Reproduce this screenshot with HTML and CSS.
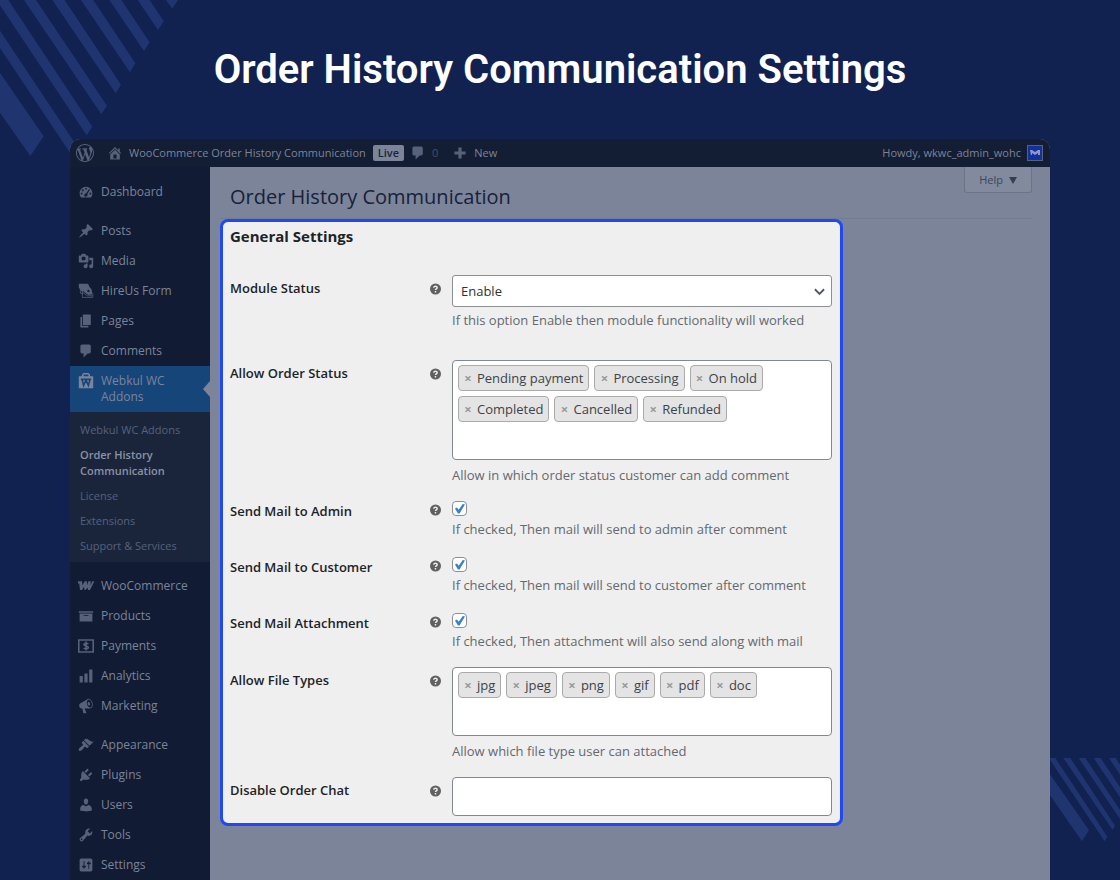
FILE: index.html
```html
<!DOCTYPE html>
<html lang="en">
<head>
  <meta charset="UTF-8" />
  <meta name="viewport" content="width=device-width, initial-scale=1" />
  <title>Order History Communication Settings</title>
  <link rel="stylesheet" href="styles.css">
</head>
<body>

  <!-- background stripes -->
  <svg class="stripes stripes-top" viewBox="0 0 540 480" aria-hidden="true">
    <path d="M0 218L131 409 91 468 0 338zM0 92L234 443 217 469 0 144zM0 0H25L277 380 260 406 0 16zM72 0H108L321 317 304 343zM157 0H194L363 254 347 280zM243 0H280L406 190 390 217zM328 0H364L449 127 432 153zM413 0H449L491 64 474 90zM498 0H534L517 26z"/>
  </svg>
  <svg class="stripes stripes-bottom" viewBox="0 0 210 366" aria-hidden="true">
    <path d="M0 49L117 217 96 250 0 112zM0 0H16L172 236 164 250 0 6zM40 0H61L195 203 188 216zM86 0H106L210 156V183zM131 0H152L210 88V118zM177 0H197L210 20V50z"/>
  </svg>

  <h1 class="title">Order History Communication Settings</h1>

  <div class="window">
    <header class="adminbar">
      <a href="#" class="bar-link" aria-label="WordPress">
        <svg class="wp-logo" viewBox="0 0 20 20"><path d="M20 10c0-5.51-4.49-10-10-10C4.48 0 0 4.49 0 10c0 5.52 4.48 10 10 10 5.51 0 10-4.48 10-10zM7.78 15.37L4.37 6.22c.55-.02 1.17-.08 1.17-.08.5-.06.44-1.13-.06-1.11 0 0-1.45.11-2.37.11-.18 0-.37 0-.58-.01C4.12 2.69 6.87 1.11 10 1.11c2.33 0 4.45.87 6.05 2.34-.68-.11-1.65.39-1.65 1.58 0 .74.45 1.36.9 2.1.35.61.55 1.36.55 2.46 0 1.49-1.4 5-1.4 5l-3.03-8.37c.54-.02.82-.17.82-.17.5-.05.44-1.25-.06-1.22 0 0-1.44.12-2.38.12-.87 0-2.33-.12-2.33-.12-.5-.03-.56 1.2-.06 1.22l.92.08 1.26 3.41zM17.41 10c.24-.64.74-1.87.43-4.25.7 1.29 1.05 2.71 1.05 4.25 0 3.29-1.73 6.24-4.4 7.78.97-2.59 1.94-5.2 2.92-7.78zM6.1 18.09C3.12 16.65 1.11 13.53 1.11 10c0-1.3.23-2.48.72-3.59C3.25 10.3 4.67 14.2 6.1 18.09zm4.03-6.63l2.58 6.98c-.86.29-1.76.45-2.71.45-.79 0-1.57-.11-2.29-.33.81-2.38 1.62-4.74 2.42-7.1z"/></svg>
      </a>
      <a href="#" class="bar-link bar-site">
        <svg class="icon" viewBox="0 0 20 20"><path d="M16 8.5l1.53 1.53-1.06 1.06L10 4.6l-6.47 6.49-1.06-1.06L10 2.5l4 4v-2h2v4zm-6-2.46l6 5.99V18H4v-5.97zM12 17v-5H8v5h4z"/></svg>
        <span>WooCommerce Order History Communication</span>
      </a>
      <span class="live">Live</span>
      <a href="#" class="bar-link bar-comments">
        <svg class="icon" viewBox="0 0 20 20"><path d="M5 2h9c1.1 0 2 .9 2 2v7c0 1.1-.9 2-2 2h-2l-5 5v-5H5c-1.1 0-2-.9-2-2V4c0-1.1.9-2 2-2z"/></svg>
        <span class="count">0</span>
      </a>
      <a href="#" class="bar-link bar-new">
        <svg class="icon" viewBox="0 0 20 20"><path d="M8 3h4v5h5v4h-5v5H8v-5H3V8h5z"/></svg>
        <span>New</span>
      </a>
      <a href="#" class="bar-link bar-user">
        <span>Howdy, wkwc_admin_wohc</span>
        <svg class="avatar" viewBox="0 0 16 16"><rect x=".5" y=".5" width="15" height="15"/><path d="M3 5h2l3 2 3-2h2v5h-2V8l-3 2-3-2v2H4z"/></svg>
      </a>
    </header>

    <div class="body">
      <nav class="sidebar">
        <ul class="menu">
          <li><a href="#"><svg class="icon" viewBox="0 0 20 20"><path fill-rule="evenodd" d="M3.76 17C2.6 15.5 2 13.7 2 11.7 2 7.2 5.6 3.5 10 3.5s8 3.7 8 8.2c0 2-.6 3.8-1.76 5.3zM9 5h2v2H9zM5 7h2v2H5zM3.5 11h2v2h-2zM14.5 11h2v2h-2zM13.8 6.3l1 .8-3.2 5.7a2 2 0 1 1-1.5-1z"/></svg><span>Dashboard</span></a></li>
          <li class="separator"></li>
          <li><a href="#"><svg class="icon" viewBox="0 0 20 20"><path d="M10.44 3.02l1.82-1.82 6.36 6.35-1.83 1.82c-1.05-.68-2.48-.57-3.41.36l-.75.75c-.92.93-1.04 2.35-.35 3.41l-1.83 1.82-2.41-2.41-2.8 2.79c-.42.42-3.38 2.71-3.8 2.29s1.86-3.39 2.28-3.81l2.79-2.79L4.1 9.36l1.83-1.82c1.05.69 2.48.57 3.4-.36l.75-.75c.93-.92 1.05-2.35.36-3.41z"/></svg><span>Posts</span></a></li>
          <li><a href="#"><svg class="icon" viewBox="0 0 20 20"><path d="M13 11V4c0-.55-.45-1-1-1h-1.67L9 1H5L3.67 3H2c-.55 0-1 .45-1 1v7c0 .55.45 1 1 1h10c.55 0 1-.45 1-1zM7 4.5c1.38 0 2.5 1.12 2.5 2.5S8.38 9.5 7 9.5 4.5 8.38 4.5 7 5.62 4.5 7 4.5zM14 6h5v10.5c0 1.38-1.12 2.5-2.5 2.5S14 17.88 14 16.5s1.12-2.5 2.5-2.5c.17 0 .34.02.5.05V9h-3V6zm-4 8.05V13h2v3.5c0 1.38-1.12 2.5-2.5 2.5S7 17.88 7 16.5 8.12 14 9.5 14c.17 0 .34.02.5.05z"/></svg><span>Media</span></a></li>
          <li><a href="#"><svg class="icon" viewBox="0 0 20 20"><path d="M1 1h11l2 2-9 8-4-5z"/><path class="form-mark" d="M3 6v7h3M5.500 8v10h13v-5M6 12l6 4h6"/><path fill-rule="evenodd" d="M5 5l8-2 4 5 1 6-5 1-6-4zM13 8.500a1.500 1.500 0 1 0 .1 0z"/></svg><span>HireUs Form</span></a></li>
          <li><a href="#"><svg class="icon" viewBox="0 0 20 20"><path d="M6 15V2h10v13H6zm-1 1h8v2H3V5h2v11z"/></svg><span>Pages</span></a></li>
          <li><a href="#"><svg class="icon" viewBox="0 0 20 20"><path d="M5 2h9c1.1 0 2 .9 2 2v7c0 1.1-.9 2-2 2h-2l-5 5v-5H5c-1.1 0-2-.9-2-2V4c0-1.1.9-2 2-2z"/></svg><span>Comments</span></a></li>
          <li class="active">
            <a href="#"><svg class="icon" viewBox="0 0 20 20"><path fill-rule="evenodd" d="M1 4h4V2l2-2h6l2 2v2h4v15H1zM7 4h6V2H7z"/><path class="bag-mark" d="M5 8l2 7.500L10 9l3 6.500L15 8M3.500 8h13"/></svg><span>Webkul WC Addons</span></a>
            <ul class="submenu">
              <li><a href="#">Webkul WC Addons</a></li>
              <li><a href="#" class="current">Order History Communication</a></li>
              <li><a href="#">License</a></li>
              <li><a href="#">Extensions</a></li>
              <li><a href="#">Support &amp; Services</a></li>
            </ul>
          </li>
          <li class="separator"></li>
          <li><a href="#"><svg class="icon" viewBox="0 0 20 20"><path d="M0 4h5l.5 5L8.500 4H11l.5 5c.5-2 1-3.500 1.500-5h3l-.5 5L18 4h2.500l-5.500 11h-2.500l-.5-3c-1 2-2 3-4 3l-.5-4-2.500 4H2.500L1.500 7H0z"/></svg><span>WooCommerce</span></a></li>
          <li><a href="#"><svg class="icon" viewBox="0 0 20 20"><path d="M19 4v2H1V4h18zM2 7h16v10H2V7zm11 3V9H7v1h6z"/></svg><span>Products</span></a></li>
          <li><a href="#"><svg class="icon" viewBox="0 0 20 20"><path class="pay-mark" d="M1 2.500h18v15H1zM13 7.500c-1-1-5.500-1.500-5.500.5 0 2.500 5.500 1.500 5.500 4 0 2-4.500 2-6 .5M10 4.500v11"/></svg><span>Payments</span></a></li>
          <li><a href="#"><svg class="icon" viewBox="0 0 20 20"><path d="M18 18V2h-4v16h4zm-6 0V7H8v11h4zm-6 0v-8H2v8h4z"/></svg><span>Analytics</span></a></li>
          <li><a href="#"><svg class="icon" viewBox="0 0 20 20"><path d="M18.15 5.94c.46 1.62.38 3.22-.02 4.48-.42 1.28-1.26 2.18-2.3 2.48-.16.06-.26.06-.4.06-.06.02-.12.02-.18.02-.06.02-.14.02-.22.02h-6.8l2.22 5.5c.02.14-.06.26-.14.34-.08.1-.24.16-.34.16H6.95c-.1 0-.26-.06-.34-.16-.08-.08-.16-.2-.14-.34l-1-5.5H4.25l-.02-.02c-.5.06-1.08-.18-1.54-.62s-.88-1.08-1.06-1.88c-.24-.8-.2-1.56-.02-2.2.18-.62.58-1.08 1.06-1.3l.02-.02 9-5.4c.1-.06.18-.1.24-.16.06-.04.14-.08.24-.12.16-.08.28-.12.5-.18 1.04-.3 2.24.1 3.22.98s1.84 2.24 2.26 3.86zm-2.58 5.98h-.02c.4-.1.74-.34 1.04-.7.58-.7.86-1.76.86-3.04 0-.64-.1-1.3-.28-1.98-.34-1.36-1.02-2.5-1.78-3.24s-1.68-1.1-2.46-.88c-.82.22-1.4.96-1.7 2-.32 1.04-.28 2.36.06 3.72.38 1.36 1 2.5 1.8 3.24.78.74 1.62 1.1 2.48.88zm-2.54-7.08c.22-.04.42-.02.62.04.38.16.76.48 1.02 1s.42 1.2.42 1.78c0 .3-.04.56-.12.8-.18.48-.44.84-.86.94-.34.1-.8-.06-1.14-.4s-.64-.86-.78-1.5c-.18-.62-.12-1.24.02-1.72s.48-.84.82-.94z"/></svg><span>Marketing</span></a></li>
          <li class="separator"></li>
          <li><a href="#"><svg class="icon" viewBox="0 0 20 20"><path d="M14.48 11.06L7.41 3.99l1.5-1.5c.5-.56 2.3-.47 3.51.32 1.21.8 1.43 1.28 2.91 2.1 1.18.64 2.45 1.26 4.45.85zm-.71.71L6.7 4.7 4.93 6.47c-.39.39-.39 1.02 0 1.41l1.06 1.06c.39.39.39 1.03 0 1.42-.6.6-1.43 1.11-2.21 1.69-.35.26-.7.53-1.01.84C1.43 14.23.4 16.08 1.4 17.07c.99 1 2.84-.03 4.18-1.36.31-.31.58-.66.85-1.02.57-.78 1.08-1.61 1.69-2.21.39-.39 1.02-.39 1.41 0l1.06 1.06c.39.39 1.02.39 1.41 0z"/></svg><span>Appearance</span></a></li>
          <li><a href="#"><svg class="icon" viewBox="0 0 20 20"><path d="M13.11 4.36L9.87 7.6 8 5.73l3.24-3.24c.35-.34 1.05-.2 1.56.32.52.51.66 1.21.31 1.55zm-8 1.77l.91-1.12 9.01 9.01-1.19.84c-.71.71-2.63 1.16-3.82 1.16H6.14L4.9 17.26c-.59.59-1.54.59-2.12 0-.59-.58-.59-1.53 0-2.12l1.24-1.24v-3.88c0-1.13.4-3.19 1.09-3.89zm7.26 3.97l3.24-3.24c.34-.35 1.04-.21 1.55.31.52.51.66 1.21.31 1.55l-3.24 3.25z"/></svg><span>Plugins</span></a></li>
          <li><a href="#"><svg class="icon" viewBox="0 0 20 20"><path d="M10 9.25c-2.27 0-2.73-3.44-2.73-3.44C7 4.02 7.82 2 9.97 2c2.16 0 2.98 2.02 2.71 3.81 0 0-.41 3.44-2.68 3.44zm0 2.57L12.72 10c2.39 0 4.52 2.33 4.52 4.53v2.49s-3.65 1.13-7.24 1.13c-3.65 0-7.24-1.13-7.24-1.13v-2.49c0-2.25 1.94-4.48 4.47-4.48z"/></svg><span>Users</span></a></li>
          <li><a href="#"><svg class="icon" viewBox="0 0 20 20"><path d="M16.68 9.77c-1.34 1.34-3.3 1.67-4.95.99l-5.41 6.52c-.99.99-2.59.99-3.58 0s-.99-2.59 0-3.57l6.52-5.42c-.68-1.65-.35-3.61.99-4.95 1.28-1.28 3.12-1.62 4.72-1.06l-2.89 2.89 2.82 2.82 2.86-2.87c.53 1.58.18 3.39-1.08 4.65zM3.81 16.21c.4.39 1.04.39 1.43 0 .4-.4.4-1.04 0-1.43-.39-.4-1.03-.4-1.43 0-.39.39-.39 1.03 0 1.43z"/></svg><span>Tools</span></a></li>
          <li><a href="#"><svg class="icon" viewBox="0 0 20 20"><path d="M18 16V4c0-1.1-.9-2-2-2H4c-1.1 0-2 .9-2 2v12c0 1.1.9 2 2 2h12c1.1 0 2-.9 2-2zM8 11h1c.55 0 1 .45 1 1s-.45 1-1 1H8v1.5c0 .28-.22.5-.5.5s-.5-.22-.5-.5V13H6c-.55 0-1-.45-1-1s.45-1 1-1h1V5.5c0-.28.22-.5.5-.5s.5.22.5.5V11zm5-2h-1c-.55 0-1-.45-1-1s.45-1 1-1h1V5.5c0-.28.22-.5.5-.5s.5.22.5.5V7h1c.55 0 1 .45 1 1s-.45 1-1 1h-1v5.5c0 .28-.22.5-.5.5s-.5-.22-.5-.5V9z"/></svg><span>Settings</span></a></li>
        </ul>
      </nav>

      <main class="content">
        <div class="page-head">
          <h2>Order History Communication</h2>
          <button type="button" class="help">Help <svg viewBox="0 0 8 8"><path d="M0 1h8L4 8z"/></svg></button>
        </div>

        <form class="panel">
          <h3>General Settings</h3>

          <div class="row row-select">
            <label for="status">Module Status</label>
            <svg class="tip" viewBox="0 0 12 12"><circle cx="6" cy="6" r="6"/><path d="M4.200 4.600c0-2.300 3.600-2.200 3.600 0C7.800 5.900 6 5.800 6 7.200M6 8.300v1.600"/></svg>
            <div>
              <div class="select-wrap">
                <select id="status">
                  <option>Enable</option>
                  <option>Disable</option>
                </select>
                <svg class="chevron" viewBox="0 0 12 8"><path d="M1 1l5 5 5-5"/></svg>
              </div>
              <p>If this option Enable then module functionality will worked</p>
            </div>
          </div>

          <div class="row">
            <label for="order-status">Allow Order Status</label>
            <svg class="tip" viewBox="0 0 12 12"><circle cx="6" cy="6" r="6"/><path d="M4.200 4.600c0-2.300 3.600-2.200 3.600 0C7.800 5.900 6 5.800 6 7.200M6 8.300v1.600"/></svg>
            <div>
              <div class="tags tags-tall">
                <span class="tag"><button type="button">×</button>Pending payment</span>
                <span class="tag"><button type="button">×</button>Processing</span>
                <span class="tag"><button type="button">×</button>On hold</span>
                <span class="tag"><button type="button">×</button>Completed</span>
                <span class="tag"><button type="button">×</button>Cancelled</span>
                <span class="tag"><button type="button">×</button>Refunded</span>
                <input type="text" id="order-status">
              </div>
              <p>Allow in which order status customer can add comment</p>
            </div>
          </div>

          <div class="row row-check">
            <label for="mail-admin">Send Mail to Admin</label>
            <svg class="tip" viewBox="0 0 12 12"><circle cx="6" cy="6" r="6"/><path d="M4.200 4.600c0-2.300 3.600-2.200 3.600 0C7.800 5.900 6 5.800 6 7.200M6 8.300v1.600"/></svg>
            <div>
              <input type="checkbox" id="mail-admin" checked>
              <p>If checked, Then mail will send to admin after comment</p>
            </div>
          </div>

          <div class="row row-check">
            <label for="mail-customer">Send Mail to Customer</label>
            <svg class="tip" viewBox="0 0 12 12"><circle cx="6" cy="6" r="6"/><path d="M4.200 4.600c0-2.300 3.600-2.200 3.600 0C7.800 5.900 6 5.800 6 7.200M6 8.300v1.600"/></svg>
            <div>
              <input type="checkbox" id="mail-customer" checked>
              <p>If checked, Then mail will send to customer after comment</p>
            </div>
          </div>

          <div class="row row-check row-tight">
            <label for="mail-attach">Send Mail Attachment</label>
            <svg class="tip" viewBox="0 0 12 12"><circle cx="6" cy="6" r="6"/><path d="M4.200 4.600c0-2.300 3.600-2.200 3.600 0C7.800 5.900 6 5.800 6 7.200M6 8.300v1.600"/></svg>
            <div>
              <input type="checkbox" id="mail-attach" checked>
              <p>If checked, Then attachment will also send along with mail</p>
            </div>
          </div>

          <div class="row row-tight">
            <label for="file-types">Allow File Types</label>
            <svg class="tip" viewBox="0 0 12 12"><circle cx="6" cy="6" r="6"/><path d="M4.200 4.600c0-2.300 3.600-2.200 3.600 0C7.800 5.900 6 5.800 6 7.200M6 8.300v1.600"/></svg>
            <div>
              <div class="tags">
                <span class="tag"><button type="button">×</button>jpg</span>
                <span class="tag"><button type="button">×</button>jpeg</span>
                <span class="tag"><button type="button">×</button>png</span>
                <span class="tag"><button type="button">×</button>gif</span>
                <span class="tag"><button type="button">×</button>pdf</span>
                <span class="tag"><button type="button">×</button>doc</span>
                <input type="text" id="file-types">
              </div>
              <p>Allow which file type user can attached</p>
            </div>
          </div>

          <div class="row row-last">
            <label for="chat">Disable Order Chat</label>
            <svg class="tip" viewBox="0 0 12 12"><circle cx="6" cy="6" r="6"/><path d="M4.200 4.600c0-2.300 3.600-2.200 3.600 0C7.800 5.900 6 5.800 6 7.200M6 8.300v1.600"/></svg>
            <div>
              <input type="text" id="chat" class="text-box">
            </div>
          </div>
        </form>
      </main>
    </div>
  </div>

</body>
</html>
```
FILE: styles.css
```css
* {
  box-sizing: border-box;
}
body {
  margin: 0;
  min-height: 100vh;
  display: flex;
  flex-direction: column;
  position: relative;
  background: #112150;
  font-family: "Open Sans", "Noto Sans", sans-serif;
  font-size: 13px;
  line-height: 18px;
}
a {
  color: inherit;
  text-decoration: none;
}
ul {
  margin: 0;
  padding: 0;
  list-style: none;
}
button, input, select {
  font: inherit;
  color: inherit;
}

/* background */
.stripes {
  position: absolute;
  fill: #20356f;
}
.stripes-top {
  top: 0;
  left: 0;
  width: 180px;
}
.stripes-bottom {
  right: 0;
  bottom: 0;
  width: 70px;
}

.title {
  margin: 0;
  padding: 46px 20px 45px;
  color: #fff;
  font-family: Roboto, sans-serif;
  font-size: 40px;
  font-weight: 600;
  line-height: 48px;
  text-align: center;
}

.window {
  flex: 1;
  display: flex;
  flex-direction: column;
  position: relative;
  margin: 0 70px;
  border-radius: 10px 10px 0 0;
  overflow: hidden;
  background: #7c8499;
}

/* admin bar */
.adminbar {
  display: flex;
  align-items: center;
  height: 28px;
  padding: 0 7px 0 6px;
  background: #131d33;
  color: #7c8499;
  font-size: 11px;
}
.icon {
  flex: none;
  width: 16px;
  height: 16px;
  fill: #56617a;
}
.bar-link {
  display: flex;
  align-items: center;
  gap: 6px;
}
.wp-logo {
  width: 18px;
  height: 18px;
  fill: #56617a;
}
.bar-site {
  margin-left: 13px;
}
.live {
  margin: 0 6px 0 7px;
  padding: 0 5px;
  border-radius: 2px;
  background: #7c8499;
  color: #1a2439;
  font-weight: 600;
  line-height: 16px;
}
.count {
  color: #465068;
}
.bar-new {
  margin-left: 14px;
}
.bar-user {
  margin-left: auto;
}
.avatar {
  width: 16px;
  height: 16px;
  fill: #142fa0;
  stroke: #56617a;
}
.avatar path {
  fill: #8f9bc0;
  stroke: none;
}

.body {
  flex: 1;
  display: flex;
}

/* side menu */
.sidebar {
  flex: none;
  width: 140px;
  padding-top: 10px;
  background: #111b33;
  color: #7c8499;
  font-size: 12px;
}
.menu > li > a {
  display: flex;
  gap: 7px;
  padding: 7px 20px 7px 8px;
  line-height: 16px;
}
.separator {
  height: 9px;
}
.active > a {
  position: relative;
  background: #16457a;
}
.active > a::after {
  content: "";
  position: absolute;
  right: 0;
  top: 15px;
  border: 8px solid transparent;
  border-right: 7px solid #7c8499;
  border-left: 0;
}
.active .icon {
  fill: #7c8499;
}
.active > a span {
  max-width: 80px;
}
.bag-mark {
  fill: none;
  stroke: #16457a;
  stroke-width: 2;
}
.form-mark {
  fill: none;
  stroke: #56617a;
}
.pay-mark {
  fill: none;
  stroke: #56617a;
  stroke-width: 2;
}
.submenu {
  display: flex;
  flex-direction: column;
  gap: 1px;
  padding: 6px 0 4px;
  background: #1a253c;
  color: #56617a;
  font-size: 11px;
  line-height: 16px;
}
.submenu a {
  display: block;
  padding: 4px 10px;
}
.submenu .current {
  color: #8a91a4;
  font-weight: 600;
}

/* page */
.content {
  flex: 1;
  min-width: 0;
  padding: 0 18px 20px 10px;
}
.page-head {
  display: flex;
  justify-content: space-between;
  align-items: flex-start;
  height: 52px;
  padding-left: 10px;
  border-bottom: 1px solid #747c91;
}
.page-head h2 {
  margin: 0;
  padding-top: 17px;
  color: #17213a;
  font-size: 20px;
  font-weight: 400;
  line-height: 26px;
}
.help {
  display: flex;
  align-items: center;
  gap: 6px;
  height: 26px;
  padding: 0 14px;
  border: 1px solid #6b748a;
  border-top: 0;
  border-radius: 0 0 3px 3px;
  background: #828a9e;
  color: #3c465c;
  font-size: 11px;
}
.help svg {
  width: 8px;
  height: 8px;
  fill: #333d55;
}

.panel {
  max-width: 623px;
  padding: 5px 8px 7px 7px;
  border: 3px solid #2049f5;
  border-radius: 8px;
  background: #efefef;
  color: #1d2327;
}
.panel h3 {
  margin: 0 0 29px;
  font-size: 15px;
  line-height: 19px;
}
.row {
  display: grid;
  grid-template-columns: 200px 22px 1fr;
  padding-bottom: 16px;
}
.row > label {
  padding-top: 4px;
  font-weight: 600;
}
.row p {
  margin: 6px 0 0;
  color: #646970;
  line-height: 19px;
}
.tip {
  width: 11px;
  height: 12px;
  margin-top: 8px;
  fill: #606060;
}
.tip path {
  fill: none;
  stroke: #eee;
  stroke-width: 1.6;
}
.row-select {
  padding-bottom: 30px;
}
.row-select p {
  margin-top: 4px;
}
.row-check {
  padding-bottom: 18px;
}
.row-check > label {
  padding-top: 1px;
}
.row-check .tip {
  margin-top: 3px;
}
.row-check p {
  margin-top: 4px;
}
.row-tight {
  padding-bottom: 16px;
}
.row-last {
  padding-bottom: 0;
}

.select-wrap {
  position: relative;
}
select {
  display: block;
  width: 100%;
  height: 32px;
  padding: 0 8px;
  appearance: none;
  border: 1px solid #8c8f94;
  border-radius: 3px;
  background: #fff;
  color: #2c3338;
}
.chevron {
  position: absolute;
  right: 7px;
  top: 13px;
  width: 11px;
  height: 8px;
  fill: none;
  stroke: #50575e;
  stroke-width: 2;
}
.tags {
  display: flex;
  flex-wrap: wrap;
  align-content: flex-start;
  gap: 5px;
  min-height: 69px;
  padding: 4px 5px;
  border: 1px solid #7e8993;
  border-radius: 4px;
  background: #fff;
}
.tags-tall {
  min-height: 100px;
}
.tags input {
  width: 20px;
  height: 26px;
  padding: 0;
  border: 0;
  outline: 0;
  background: transparent;
}
.tag {
  display: flex;
  align-items: center;
  height: 26px;
  padding: 0 5px;
  border: 1px solid #aaa;
  border-radius: 4px;
  background: #e4e4e4;
  color: #3c434a;
}
.tag button {
  width: 8px;
  margin-right: 5px;
  padding: 0;
  border: 0;
  background: none;
  color: #999;
  font-weight: 700;
}
input[type="checkbox"] {
  display: block;
  width: 15px;
  height: 15px;
  margin: 0;
  appearance: none;
  border: 1px solid #8c8f94;
  border-radius: 4px;
  background: #fff;
}
input[type="checkbox"]:checked::before {
  content: "";
  display: block;
  height: 13px;
  background: #3582c4;
  clip-path: polygon(15% 50%, 30% 42%, 44% 60%, 75% 15%, 92% 20%, 50% 88%, 38% 88%);
}
.text-box {
  display: block;
  width: 100%;
  height: 39px;
  padding: 0 8px;
  border: 1px solid #7e8993;
  border-radius: 4px;
  background: #fff;
}
```
